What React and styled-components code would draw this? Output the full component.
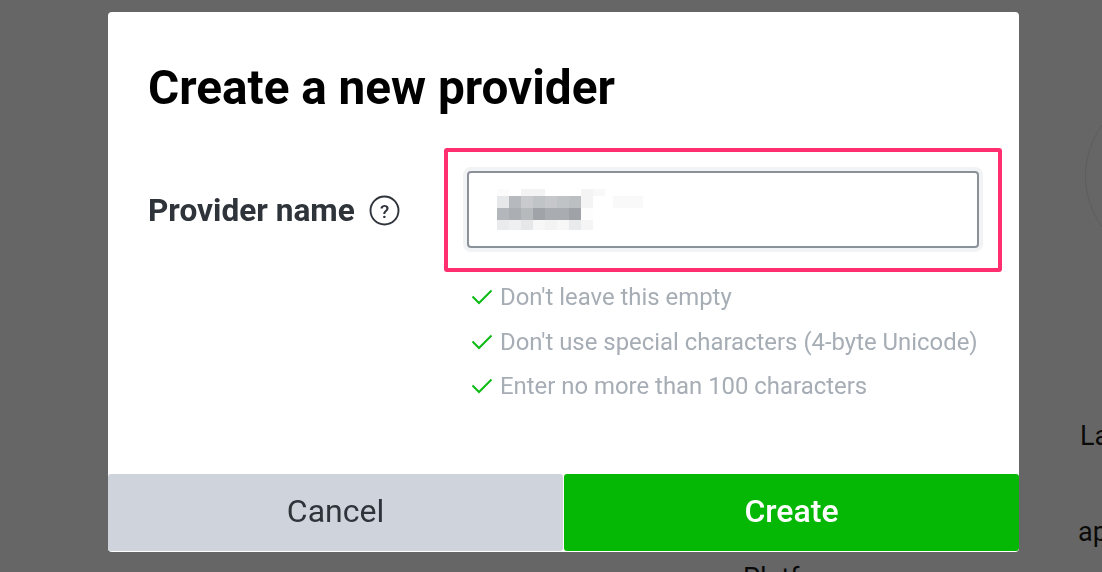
import React from "react";
import styled, { createGlobalStyle } from "styled-components";

const GlobalStyle = createGlobalStyle`
  html, body { margin: 0; padding: 0; }
  body {
    width: 1102px;
    height: 572px;
    overflow: hidden;
    background: #ffffff;
    font-family: Roboto, "Noto Sans", Arial, sans-serif;
  }
`;

const BackPage = styled.div`
  position: relative;
  width: 1102px;
  height: 572px;
  overflow: hidden;
  display: grid;
  grid-template-columns: 743px 337px 1fr;
  color: #1b1b1b;
`;

const BackBottom = styled.div`
  display: flex;
  flex-direction: column;
  justify-content: flex-end;
`;

const BackRight = styled.div`
  display: flex;
  flex-direction: column;
  padding-top: 90px;
`;

const BackCircle = styled.div`
  width: 170px;
  height: 170px;
  border-radius: 50%;
  border: 1px solid #e6e6e6;
  margin-left: 5px;
`;

const BackText = styled.div`
  font-size: 27px;
  line-height: 32px;
  margin-top: ${(p) => p.$mt || 0}px;
  margin-bottom: ${(p) => p.$mb || 0}px;
  margin-left: ${(p) => p.$ml || 0}px;
  white-space: nowrap;
`;

const Overlay = styled.div`
  position: fixed;
  inset: 0;
  background: rgba(0, 0, 0, 0.6);
  display: flex;
  align-items: flex-start;
  padding: 12px 0 0 108px;
`;

const Modal = styled.div`
  width: 911px;
  height: 540px;
  background: #fff;
  border-radius: 4px;
  overflow: hidden;
  display: flex;
  flex-direction: column;
`;

const Body = styled.div`
  flex: 1;
  padding: 0 0 0 40px;
  display: flex;
  flex-direction: column;
`;

const Title = styled.h1`
  margin: 48px 0 0;
  font-size: 47.7px;
  line-height: 56px;
  font-weight: 700;
  color: #000;
  letter-spacing: 0;
`;

const FormRow = styled.div`
  display: grid;
  grid-template-columns: 296px 558px;
  margin-top: 32px;
`;

const LabelCell = styled.div`
  display: flex;
  align-items: center;
  height: 124px;
  gap: 14px;
`;

const Label = styled.span`
  font-size: 31.6px;
  font-weight: 700;
  color: #2f343b;
`;

const Highlight = styled.div`
  border: 4px solid #ff2e6f;
  border-radius: 3px;
  padding: 19px 19px 18px 19px;
`;

const InputBox = styled.div`
  height: 73px;
  border: 2px solid #8b9199;
  border-radius: 4px;
  box-shadow: 0 0 0 4px #f2f3f4;
  display: flex;
  align-items: center;
  padding-left: 28px;
`;

const Rules = styled.ul`
  list-style: none;
  margin: 12px 0 0 296px;
  padding: 0 0 0 27px;
  display: flex;
  flex-direction: column;
  gap: 18px;
`;

const Rule = styled.li`
  display: flex;
  align-items: center;
  gap: 7px;
  font-size: 23.9px;
  line-height: 26.5px;
  color: #a6adb5;
`;

const Footer = styled.div`
  display: grid;
  grid-template-columns: 1fr 1fr;
  gap: 1px;
  height: 77px;
  margin-bottom: 1px;
`;

const Button = styled.button`
  border: none;
  border-radius: 3px;
  font-family: Roboto, "Noto Sans", Arial, sans-serif;
  font-size: 32px;
  font-weight: ${(p) => (p.$primary ? 500 : 400)};
  background: ${(p) => (p.$primary ? "#06b806" : "#cfd4dc")};
  color: ${(p) => (p.$primary ? "#ffffff" : "#2f343b")};
  cursor: pointer;
  padding: 0 0 4px;
`;

const HelpIcon = () => (
  <svg width="31" height="31" viewBox="0 0 31 31" fill="none">
    <circle cx="15.5" cy="15.5" r="14" stroke="#2f343b" strokeWidth="1.9" />
    <text
      x="15.5"
      y="22.5"
      textAnchor="middle"
      fontSize="19"
      fontWeight="500"
      fontFamily="Roboto, Arial, sans-serif"
      fill="#2f343b"
    >
      ?
    </text>
  </svg>
);

const Check = () => (
  <svg width="22" height="16" viewBox="0 0 22 16" fill="none">
    <path d="M1.5 7.5 L8 14 L20.5 1.5" stroke="#0cbb14" strokeWidth="2" />
  </svg>
);

const mosaic = [
  { y: 0, h: 7, cells: ["#fbfbfb", "#ffffff", "#f3f3f4", "#f3f3f4", "#ffffff", "#ffffff", "#ffffff", "#f4f4f5", "#f8f8f8"] },
  { y: 7, h: 12, cells: ["#e6e7e9", "#b6b9bd", "#c8cacd", "#c1c4c7", "#c5c7ca", "#c0c3c6", "#bcbfc2", "#f4f4f5", "#ffffff"] },
  { y: 19, h: 12, cells: ["#b3b6ba", "#abaeb2", "#b7babd", "#a0a3a7", "#a9acb0", "#a9acb0", "#9fa2a6", "#fdfdfd", "#ffffff"] },
  { y: 31, h: 10, cells: ["#eaebec", "#eeeff0", "#e6e7e9", "#f7f7f8", "#f3f3f4", "#f7f7f8", "#e9eaeb", "#f5f5f6", "#ffffff"] },
];

const Mosaic = () => (
  <svg width="150" height="41" viewBox="0 0 150 41">
    {mosaic.map((row, ri) =>
      row.cells.map((c, ci) => (
        <rect key={`${ri}-${ci}`} x={ci * 12} y={row.y} width="12" height={row.h} fill={c} />
      ))
    )}
    <rect x="116" y="7" width="30" height="12" fill="#f9f9f9" />
  </svg>
);

export default function App() {
  return (
    <>
      <GlobalStyle />
      <BackPage>
        <div />
        <BackBottom>
          <BackText $mb={-22}>Platform</BackText>
        </BackBottom>
        <BackRight>
          <BackCircle />
          <BackText $mt={158}>Language</BackText>
          <BackText $mt={64} $ml={-2}>apps</BackText>
        </BackRight>
      </BackPage>
      <Overlay>
        <Modal>
          <Body>
            <Title>Create a new provider</Title>
            <FormRow>
              <LabelCell>
                <Label>Provider name</Label>
                <HelpIcon />
              </LabelCell>
              <Highlight>
                <InputBox>
                  <Mosaic />
                </InputBox>
              </Highlight>
            </FormRow>
            <Rules>
              <Rule>
                <Check />
                Don't leave this empty
              </Rule>
              <Rule>
                <Check />
                Don't use special characters (4-byte Unicode)
              </Rule>
              <Rule>
                <Check />
                Enter no more than 100 characters
              </Rule>
            </Rules>
          </Body>
          <Footer>
            <Button>Cancel</Button>
            <Button $primary>Create</Button>
          </Footer>
        </Modal>
      </Overlay>
    </>
  );
}
